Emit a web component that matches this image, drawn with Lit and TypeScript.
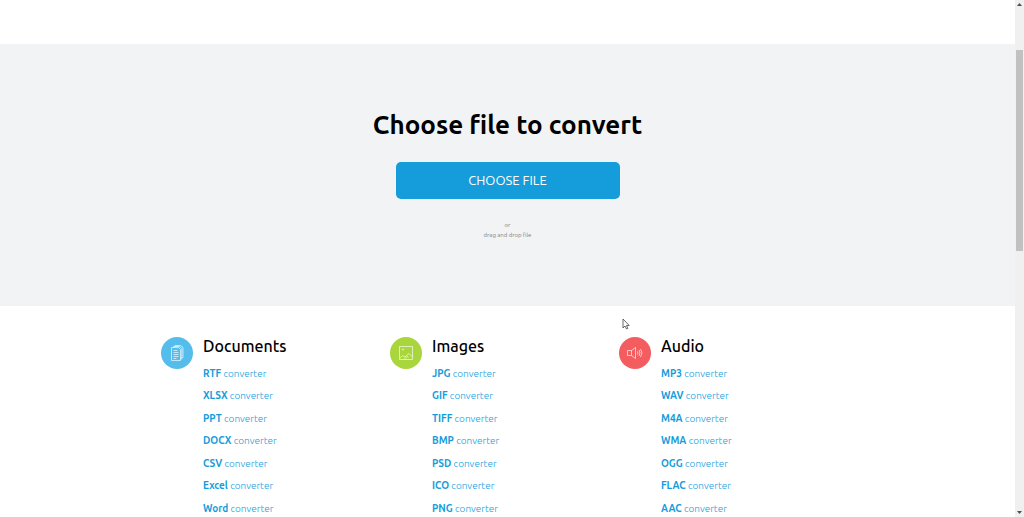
import { LitElement, html, css, svg } from "lit";
import { customElement } from "lit/decorators.js";

const groups = [
  {
    title: "Documents",
    tone: "blue",
    formats: ["RTF", "XLSX", "PPT", "DOCX", "CSV", "Excel", "Word"],
    icon: svg`<path d="M10.500 10.500h7l2 2v11h-9z M12.500 10.500v-1h6l2.300 2v10.500h-1.300 M14 9.500v-1h5.500l2.500 2v10h-1.200 M12.500 13.500h4 M12.500 15.500h5 M12.500 17.500h5 M12.500 19.500h5 M12.500 21.500h3"/>`,
  },
  {
    title: "Images",
    tone: "green",
    formats: ["JPG", "GIF", "TIFF", "BMP", "PSD", "ICO", "PNG"],
    icon: svg`<path d="M9.500 9.500h13v13h-13z M9.500 21.500l3-3 2.500 1.500 4-3.500 3.500 3.500 M14 22.500l3-3 1.500 1"/><circle cx="13" cy="12.500" r=".6"/>`,
  },
  {
    title: "Audio",
    tone: "red",
    formats: ["MP3", "WAV", "M4A", "WMA", "OGG", "FLAC", "AAC"],
    icon: svg`<path d="M8.500 13.500h4v5h-4z M12.500 13.500l4-3v11l-4-3 M18.500 14.500q1 1.500 0 3 M20 13q2 3 0 6 M21.500 12q3 4 0 8"/>`,
  },
];

@customElement("app-root")
export class AppRoot extends LitElement {
  static styles = css`
    :host {
      display: flex;
      height: 100vh;
      overflow: hidden;
      position: relative;
      background: #fff;
      color: #000;
      font-family: Ubuntu, "Noto Sans", sans-serif;
    }
    main {
      flex: 1;
      min-width: 0;
      overflow: hidden;
    }
    .top {
      height: 44px;
    }
    .hero {
      background: #f1f3f5;
      display: flex;
      flex-direction: column;
      align-items: center;
      padding: 64px 16px 66px;
      text-align: center;
    }
    h1 {
      margin: 0;
      font-size: 26px;
      line-height: 34px;
      font-weight: 700;
    }
    .choose {
      margin: 20px 0 21px;
      width: 224px;
      height: 37px;
      padding: 0 0 2px;
      border: 0;
      border-radius: 5px;
      background: #159cdb;
      color: #fff;
      font: 400 13px/20px Ubuntu, "Noto Sans", sans-serif;
    }
    .hint {
      margin: 0;
      font-size: 6px;
      line-height: 10px;
      color: #808284;
    }
    .groups {
      display: grid;
      grid-template-columns: repeat(3, 1fr);
      max-width: 687px;
      margin: 0 auto;
      padding: 31px 6px 0 0;
    }
    .group {
      display: flex;
      align-items: flex-start;
      gap: 10px;
    }
    .badge {
      width: 32px;
      height: 32px;
      border-radius: 50%;
      fill: none;
      stroke: #fff;
      stroke-opacity: 0.8;
      stroke-width: 0.8;
      flex: none;
    }
    .blue {
      background: #55bdec;
    }
    .green {
      background: #a9d63d;
    }
    .red {
      background: #f45d5f;
    }
    h2 {
      margin: 0 0 8px;
      font-size: 16px;
      line-height: 18px;
      font-weight: 500;
    }
    ul {
      list-style: none;
      margin: 0;
      padding: 0;
      height: 157px;
      display: grid;
      grid-auto-rows: 1fr;
    }
    li {
      font-size: 10px;
      line-height: 22px;
    }
    a {
      color: #159cdb;
      text-decoration: none;
      font-weight: 300;
    }
    b {
      font-weight: 700;
    }
    .scroll {
      flex: none;
      width: 9px;
      background: #f0f0f0;
      display: flex;
      flex-direction: column;
      align-items: center;
      padding: 3px 0;
      box-sizing: border-box;
    }
    .arrow {
      width: 5px;
      height: 3px;
      fill: #505050;
    }
    .track {
      flex: 1;
      align-self: stretch;
      padding: 44px 1px 0;
    }
    .thumb {
      height: 201px;
      background: #c1c1c1;
    }
    .cursor {
      position: absolute;
      left: 622px;
      top: 318px;
      width: 8px;
      height: 12px;
      fill: #fff;
      stroke: #444;
      stroke-width: 0.8;
    }
  `;

  render() {
    return html`
      <main>
        <div class="top"></div>
        <section class="hero">
          <h1>Choose file to convert</h1>
          <button class="choose" type="button">CHOOSE FILE</button>
          <p class="hint">or<br />drag and drop file</p>
        </section>
        <section class="groups">
          ${groups.map(
            (g) => html`<div class="group">
              <svg class="badge ${g.tone}" viewBox="0 0 32 32" aria-hidden="true">${g.icon}</svg>
              <div>
                <h2>${g.title}</h2>
                <ul>
                  ${g.formats.map((f) => html`<li><a href="#"><b>${f}</b> converter</a></li>`)}
                </ul>
              </div>
            </div>`
          )}
        </section>
      </main>
      <div class="scroll" aria-hidden="true">
        <svg class="arrow" viewBox="0 0 5 3"><path d="M0 3L2.500 0 5 3z" /></svg>
        <div class="track"><div class="thumb"></div></div>
        <svg class="arrow" viewBox="0 0 5 3"><path d="M0 0h5L2.500 3z" /></svg>
      </div>
      <svg class="cursor" viewBox="0 0 8 12" aria-hidden="true">
        <path d="M1 1v9l2-2 1.500 3 1.300-.6L4.500 7.500H7.200z" />
      </svg>
    `;
  }
}
